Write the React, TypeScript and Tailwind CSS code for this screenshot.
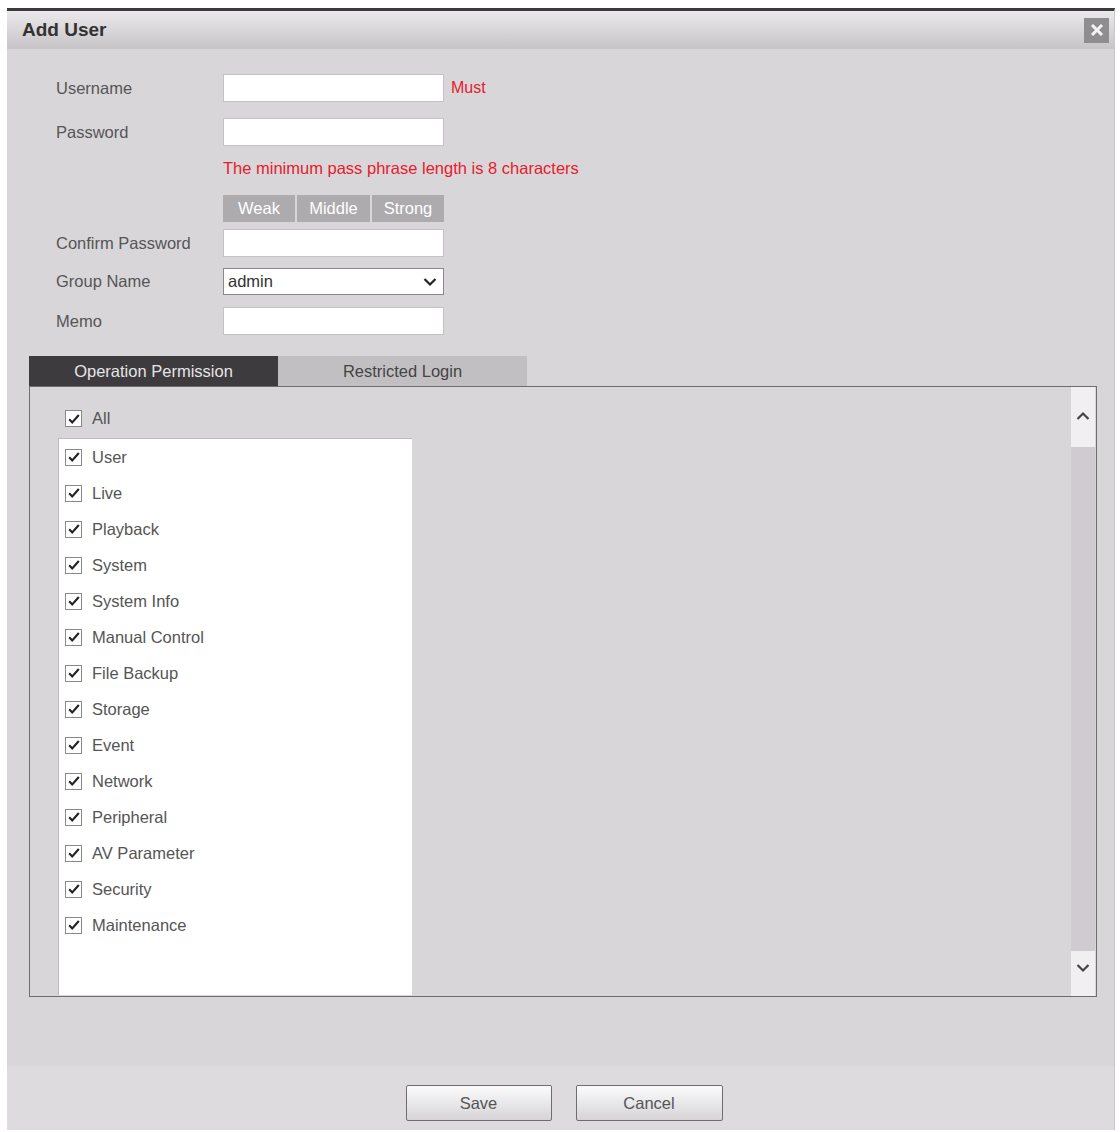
import React from "react"

const items = [
  "User",
  "Live",
  "Playback",
  "System",
  "System Info",
  "Manual Control",
  "File Backup",
  "Storage",
  "Event",
  "Network",
  "Peripheral",
  "AV Parameter",
  "Security",
  "Maintenance",
]

function Check() {
  return (
    <span className="w-[17px] h-[17px] border border-[#8a888b] bg-white flex items-center justify-center shrink-0">
      <svg viewBox="0 0 16 16" className="w-[14px] h-[14px]">
        <path d="M2.5 8.2 L6 12 L13.5 3.5" fill="none" stroke="#222" strokeWidth="2.4" />
      </svg>
    </span>
  )
}

function Field({ label, children, className = "" }: { label: string; children: React.ReactNode; className?: string }) {
  return (
    <div className={`flex items-center ${className}`}>
      <span className="w-[167px] text-[16.5px] text-[#555]">{label}</span>
      {children}
    </div>
  )
}

const inputCls = "w-[221px] h-[28px] bg-white border border-[#c4c2c5]"

export default function App() {
  return (
    <div className="w-[1120px] h-[1132px] bg-white pt-[8px] font-['Liberation_Sans',Arial,sans-serif]">
      <div className="ml-[7px] w-[1108px] h-[1122px] flex flex-col border-t-[3px] border-[#3b3a3c] border-r border-r-[#c8c6c9] bg-[#d9d6da]">
        {/* title bar */}
        <div className="h-[38px] flex items-center justify-between pl-[15px] pr-[5px] bg-gradient-to-b from-[#ebe9eb] to-[#c7c4c8]">
          <span className="text-[19px] font-bold text-[#333]">Add User</span>
          <span className="w-[25px] h-[25px] bg-[#8f8d90] flex items-center justify-center">
            <svg viewBox="0 0 14 14" className="w-[14px] h-[14px]">
              <path d="M2 2 L12 12 M12 2 L2 12" stroke="#f4f4f4" strokeWidth="3" />
            </svg>
          </span>
        </div>

        {/* form */}
        <div className="pl-[49px] pt-[25px]">
          <Field label="Username">
            <div className={inputCls} />
            <span className="ml-[7px] text-[16px] text-[#e5202a]">Must</span>
          </Field>
          <Field label="Password" className="mt-[16px]">
            <div className={inputCls} />
          </Field>
          <div className="ml-[167px] mt-[14px] text-[16.5px] text-[#e5202a] leading-[16px]">
            The minimum pass phrase length is 8 characters
          </div>
          <div className="ml-[167px] mt-[19px] flex gap-[2px] text-[16.5px] text-white">
            <span className="w-[72px] h-[27px] bg-[#adabae] flex items-center justify-center">Weak</span>
            <span className="w-[73px] h-[27px] bg-[#adabae] flex items-center justify-center">Middle</span>
            <span className="w-[72px] h-[27px] bg-[#adabae] flex items-center justify-center">Strong</span>
          </div>
          <Field label="Confirm Password" className="mt-[7px]">
            <div className={inputCls} />
          </Field>
          <Field label="Group Name" className="mt-[11px]">
            <div className="w-[221px] h-[27px] bg-white border border-[#8a888b] flex items-center justify-between pl-[4px] pr-[6px]">
              <span className="text-[16.5px] text-[#333]">admin</span>
              <svg viewBox="0 0 14 10" className="w-[14px] h-[10px]">
                <path d="M1.5 2 L7 7.5 L12.5 2" fill="none" stroke="#222" strokeWidth="2.2" />
              </svg>
            </div>
          </Field>
          <Field label="Memo" className="mt-[12px]">
            <div className={inputCls} />
          </Field>
        </div>

        {/* tabs */}
        <div className="ml-[22px] mt-[21px] flex text-[16.5px]">
          <span className="w-[249px] h-[30px] bg-[#3d3b3e] text-[#e6e4e7] flex items-center justify-center">Operation Permission</span>
          <span className="w-[249px] h-[30px] bg-[#c2bfc3] text-[#444] flex items-center justify-center">Restricted Login</span>
        </div>
        <div className="ml-[22px] w-[1068px] h-[611px] border border-[#6f6d70] flex">
          <div className="flex-1 pl-[28px]">
            <div className="h-[51px] pt-[23px] pl-[7px] flex items-start gap-[10px]">
              <Check />
              <span className="text-[16.5px] text-[#555] leading-[17px]">All</span>
            </div>
            <div className="w-[354px] h-[557px] bg-white border-t border-l border-[#bdbbbe] pl-[6px]">
              {items.map((item) => (
                <div key={item} className="h-[36px] flex items-center gap-[10px]">
                  <Check />
                  <span className="text-[16.5px] text-[#555]">{item}</span>
                </div>
              ))}
            </div>
          </div>
          <div className="w-[24px] mr-[1px] flex flex-col">
            <div className="h-[60px] bg-[#f1eff2] flex items-start justify-center pt-[24px]">
              <svg viewBox="0 0 14 10" className="w-[14px] h-[10px]">
                <path d="M1.5 8 L7 2.5 L12.5 8" fill="none" stroke="#444" strokeWidth="2.2" />
              </svg>
            </div>
            <div className="flex-1 bg-[#cfcbd0]" />
            <div className="h-[45px] bg-[#f1eff2] flex items-start justify-center pt-[12px]">
              <svg viewBox="0 0 14 10" className="w-[14px] h-[10px]">
                <path d="M1.5 2 L7 7.5 L12.5 2" fill="none" stroke="#444" strokeWidth="2.2" />
              </svg>
            </div>
          </div>
        </div>

        {/* footer */}
        <div className="mt-auto h-[64px] bg-[#dedbdf] flex items-start justify-center gap-[24px] pl-[7px] pt-[19px]">
          <button className="w-[146px] h-[36px] rounded-[2px] border border-[#6f6d70] bg-gradient-to-b from-[#fbfbfc] to-[#d6d4d7] text-[16.5px] text-[#555]">
            Save
          </button>
          <button className="w-[147px] h-[36px] rounded-[2px] border border-[#6f6d70] bg-gradient-to-b from-[#fbfbfc] to-[#d6d4d7] text-[16.5px] text-[#555]">
            Cancel
          </button>
        </div>
      </div>
    </div>
  )
}
